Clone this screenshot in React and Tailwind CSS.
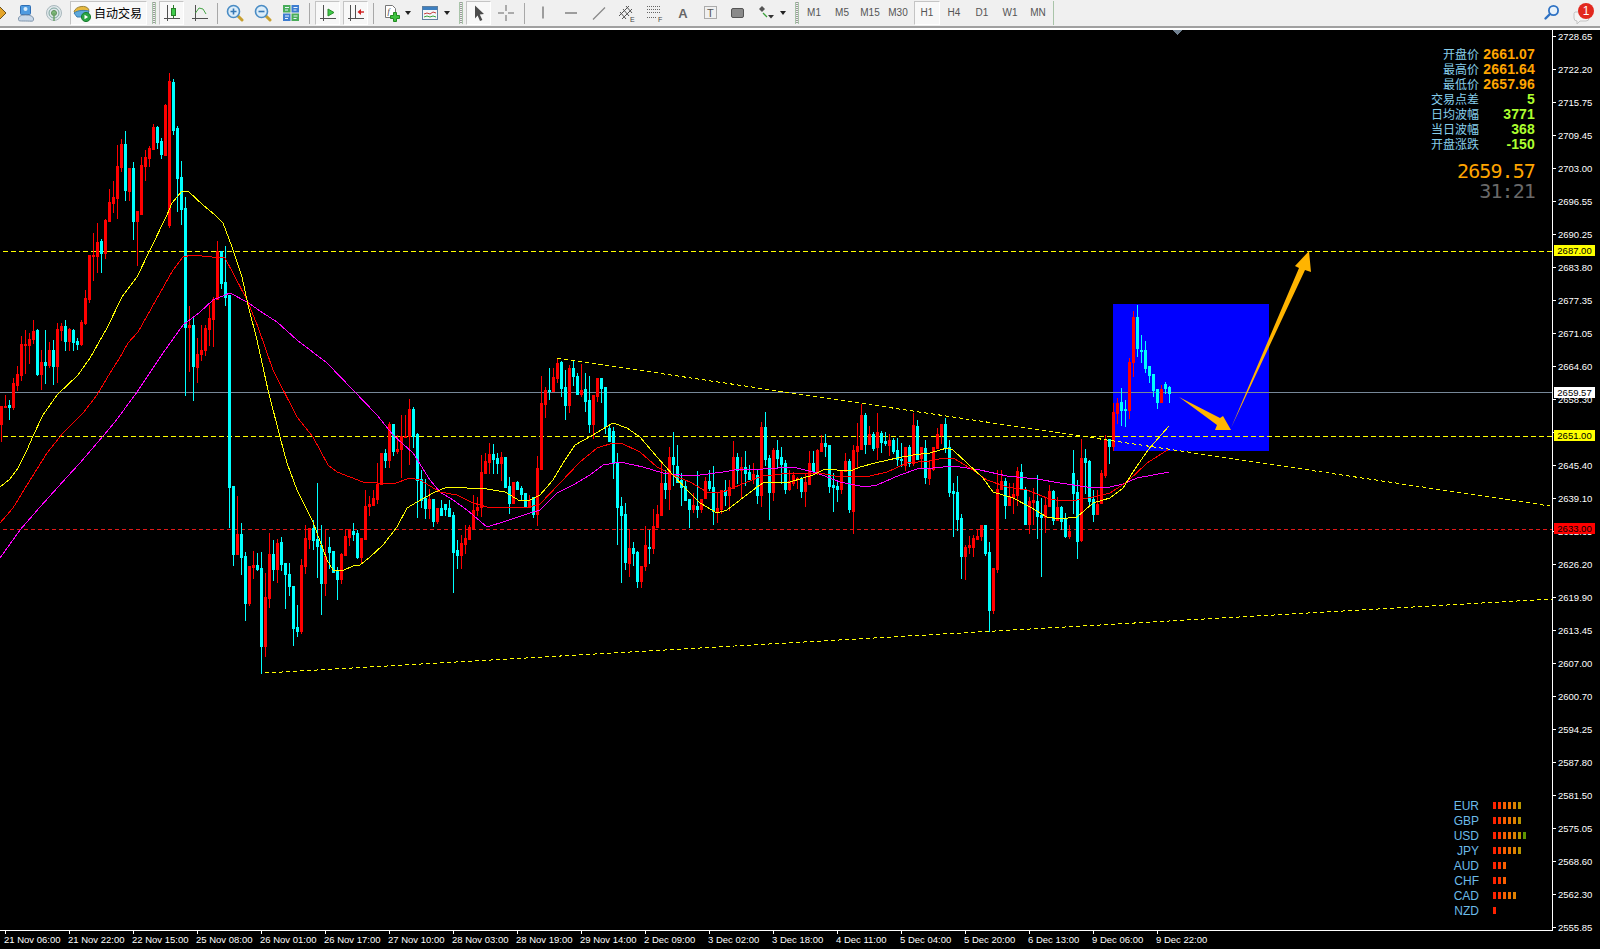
import React from "react";

const CANDLES = `r406,424,406,441 r406,407,395,407 c405,407,400,419 r383,407,378,409 r374,385,366,390 r344,375,336,380 r344,345,330,373 r339,345,333,363 r331,339,320,343 c330,374,329,375 r362,374,350,389 c362,365,330,383 r350,365,342,367 c350,366,340,384 r329,366,323,382 r326,330,323,340 c326,341,320,350 r329,341,328,350 c330,342,329,350 c341,344,338,349 r322,344,320,345
r298,323,290,324 r255,299,255,302 r255,256,233,280 r242,256,223,272 c241,253,239,272 r220,253,219,258 r202,221,189,221 r197,203,181,212 r166,198,145,218 r144,167,139,171 c144,190,131,200 r168,191,168,200 c168,221,162,239 r211,221,211,265 r165,214,157,214 r157,166,150,180 r148,158,146,166 r127,149,124,149 c127,142,126,148 c141,154,138,158 r105,155,104,155 r81,225,73,227 c82,130,79,134 c128,178,126,211 c177,209,161,224 c208,327,197,395 r325,327,306,371 c325,366,318,400 r354,367,338,382 r350,354,325,360 r328,350,325,355 r318,329,305,345 r299,319,297,346 r251,299,241,299 c251,283,251,288 c282,297,246,305
c295,487,295,527 c486,554,486,565 r534,554,496,554 c534,557,523,574 c556,603,552,620 r566,603,566,605 r565,567,551,578 c565,569,553,570 c568,646,552,673 r597,646,573,656 r554,598,533,607 c554,569,540,580 r543,569,539,582 c542,564,537,570 c563,574,563,608 c574,586,563,595 c586,628,586,645 c627,631,605,636 r565,631,559,633 r538,566,525,573 r528,539,528,548 c528,540,520,549 c539,546,483,577 c545,583,525,614 r556,583,530,595 c547,552,537,568 c551,572,551,572 c571,579,567,599 r554,579,553,583 r536,555,529,555 r529,537,529,545 c531,534,523,540 c533,557,530,558 r538,557,538,562 r506,539,490,539 r504,506,496,515 r498,505,490,505 r484,499,463,503 r453,484,453,484 c453,460,449,467 r424,460,422,467 c424,451,424,455 r449,451,435,453 r436,449,415,477 r436,437,415,437 r409,436,399,464 c409,436,407,447 c434,480,433,517 c479,500,470,507 c498,508,479,518 r499,508,489,518 c499,521,499,526 r508,521,508,523 c508,515,500,515 c504,509,504,515 c508,516,500,516 c515,552,512,592 c550,555,540,568 r543,555,535,568 r538,544,525,553 r527,539,525,539 r510,528,495,528 r507,510,497,515 r472,507,455,516 r461,473,453,473 r454,462,443,473 c454,459,444,473 c458,463,453,473 r457,463,452,480 c457,487,457,487 c486,503,477,513 r482,503,482,503 c482,489,481,489 c488,494,486,500 c493,506,493,506 r500,507,495,507 c497,514,497,517 r468,514,456,525 r403,469,376,469 r390,404,387,417
c390,391,368,399 r377,391,368,391 r363,378,358,382 c362,388,361,396 c387,405,370,419 r368,405,365,412 c368,376,360,385 c376,394,373,394 r390,394,364,396 c389,401,373,411 c400,424,376,432 r395,424,395,438 r378,396,378,401 c378,388,378,402 c387,426,387,433 c428,441,425,441 c431,463,427,478 c462,507,453,544 c506,515,497,582 c514,562,503,569 r548,563,530,576 c548,553,542,565 c552,581,551,587 r566,581,566,587 r545,566,526,570 c547,548,530,563 r526,548,509,553 r514,527,505,527 r483,515,461,515 c483,489,470,498 r457,489,447,509 c457,464,432,485 c466,482,445,482 c480,487,473,505 c486,500,480,500 c499,509,499,527 r505,509,493,512 c506,509,471,517 r499,509,499,512 r481,498,477,498 c481,488,470,490 c487,511,466,524 r508,512,492,522 r490,509,490,513 c490,495,480,505 r487,495,480,510 r457,488,441,488 c457,470,453,483 r467,470,457,498 c467,473,451,485 c472,479,465,479 r474,479,463,483 c475,495,470,503 r427,495,422,506 c427,459,412,465 c458,492,455,519 r450,492,448,500 c450,458,440,467 c457,464,447,483 c463,489,460,493 r481,489,470,490 r475,483,472,485 r478,479,477,488 c478,491,477,497 r482,491,473,506 r463,484,451,484 c463,471,451,474 r450,471,449,474 r443,451,435,451
c443,446,434,456 c445,486,445,492 c485,487,473,511 c486,489,482,501 r471,489,470,493 r461,471,453,471 c461,509,459,512 r450,511,445,533 r446,451,423,468 r415,449,404,449 c415,444,413,453 r434,444,426,444 c434,448,432,450 r432,447,413,459 c433,442,431,452 c441,443,432,445 r440,445,434,455 c440,451,438,453 c450,459,438,465 c459,460,443,466 r447,465,447,470 c447,463,445,466 r425,463,413,465 c426,459,420,459 r447,458,447,468 c448,477,440,483 r468,478,460,484 r447,469,447,470 r434,448,428,448 r424,435,424,443 c424,448,418,452 c447,492,440,496 c491,493,483,536 c492,519,476,530 c518,556,514,578 r547,556,545,579 r545,547,536,553 r538,547,535,556 r536,539,530,539 r525,536,525,540 c525,553,525,555 c552,610,542,631 r568,610,568,613 r489,569,470,572 r481,489,470,489 c481,505,478,518 r496,505,483,505 r494,497,483,513 r471,495,467,505 c472,489,464,489 c489,524,487,524 r501,524,497,533 r500,502,488,524 c501,516,475,538 c515,517,498,576 r505,517,497,532 r491,506,485,506 c491,520,490,524 r507,520,497,520 c507,521,506,529 c519,536,513,537 r531,536,525,538 c473,493,450,513 c492,541,480,558 r458,540,439,541 c458,462,449,493 c461,501,460,505 c499,514,490,521 r504,514,490,514 r473,503,470,503 r440,475,435,477
c439,446,439,463 r412,446,403,450 r403,413,398,423 c402,410,388,425 c409,410,400,426 r362,410,358,418 r317,362,311,376 c317,348,305,356 c350,351,335,362 c350,368,341,372 c366,375,366,382 c374,390,374,396 c389,402,389,408 r389,402,385,402 c384,388,382,393 c387,393,386,402`
  .trim().split(/\s+/).map((s) => {
    const [t, b, h, l] = s.slice(1).split(",").map(Number);
    return { red: s[0] === "r", t, b, h, l };
  });

const YELLOW = "0,487 10,479 18,468 27,450 33,436 43,415 57,395 78,375 90,358 107,328 122,297 137,277 150,250 167,215 172,203 182,191 188,191 203,205 215,215 223,223 232,247 242,277 248,305 257,340 268,390 280,437 287,463 297,490 313,522 327,560 333,570 342,571 353,566 360,565 370,557 383,545 397,527 407,508 417,502 433,493 447,487 467,488 487,489 505,492 520,501 530,500 540,495 553,480 563,463 575,445 593,435 613,423 627,428 640,437 657,457 673,475 687,490 700,503 717,513 727,510 740,500 757,487 763,483 790,482 813,475 825,469 837,470 853,470 860,467 875,463 897,458 913,455 930,453 947,448 953,450 967,463 983,478 993,492 1013,498 1030,507 1047,517 1060,519 1077,517 1093,503 1110,498 1123,488 1133,472 1148,450 1169,426";
const RED = "0,523 13,508 27,485 47,453 63,433 83,413 97,395 110,373 119,359 128,343 138,332 160,293 173,270 183,257 192,255 212,257 225,258 233,273 247,300 258,327 273,370 297,417 313,437 328,465 337,472 350,477 363,482 393,484 410,478 420,480 440,492 457,495 473,503 487,507 517,508 530,507 540,504 560,483 580,462 597,448 613,443 623,444 640,452 657,467 673,475 690,482 707,492 723,492 740,485 757,478 763,476 790,473 820,473 840,477 870,476 887,472 907,463 930,461 943,458 953,458 970,468 987,480 1007,487 1027,490 1047,498 1060,501 1077,500 1093,497 1110,493 1127,482 1147,463 1169,449";
const MAGENTA = "0,558 20,530 40,507 67,477 80,463 115,422 137,392 163,353 183,325 200,312 213,300 230,293 247,302 263,313 277,322 297,340 327,363 353,390 377,415 393,435 413,453 430,480 440,492 453,500 467,510 487,527 503,522 530,513 540,510 557,493 573,485 590,475 603,465 620,462 643,467 663,473 680,475 700,475 723,472 740,469 763,469 793,467 817,473 840,482 865,487 877,485 900,475 917,469 933,468 953,466 980,470 1007,476 1037,479 1060,483 1087,487 1110,487 1123,484 1137,478 1169,472";

const PRICES = ["2728.65","2722.20","2715.75","2709.45","2703.00","2696.55","2690.25","2683.80","2677.35","2671.05","2664.60","2658.30","2651.85","2645.40","2639.10","2632.65","2626.20","2619.90","2613.45","2607.00","2600.70","2594.25","2587.80","2581.50","2575.05","2568.60","2562.30","2555.85"];
const TIMES = ["21 Nov 06:00","21 Nov 22:00","22 Nov 15:00","25 Nov 08:00","26 Nov 01:00","26 Nov 17:00","27 Nov 10:00","28 Nov 03:00","28 Nov 19:00","29 Nov 14:00","2 Dec 09:00","3 Dec 02:00","3 Dec 18:00","4 Dec 11:00","5 Dec 04:00","5 Dec 20:00","6 Dec 13:00","9 Dec 06:00","9 Dec 22:00"];
const INFO = [
  ["开盘价","2661.07","text-[#ffa500]"],["最高价","2661.64","text-[#ffa500]"],["最低价","2657.96","text-[#ffa500]"],
  ["交易点差","5","text-[#adff2f]"],["日均波幅","3771","text-[#adff2f]"],["当日波幅","368","text-[#adff2f]"],["开盘涨跌","-150","text-[#adff2f]"],
];
const CURR = [["EUR",6],["GBP",6],["USD",7],["JPY",6],["AUD",3],["CHF",3],["CAD",5],["NZD",1]];
const BAR = ["#ff2200","#ff3300","#f95f00","#ee6f00","#e08000","#b89400","#5f9400"];

const A = "#505050";
const Svg = ({ children, w = 18, h = 18 }) => (
  <svg width={w} height={h} viewBox={`0 0 ${w} ${h}`} className="block shrink-0">{children}</svg>
);
const Axes = () => <path d="M4.5 1v16M1 14.5h16" stroke={A} fill="none" />;
const Slot = ({ w, active, children, className = "" }) => (
  <div
    className={`h-[24px] flex items-center justify-center shrink-0 ${active ? "border border-t-[#c4c4c4] border-l-[#c4c4c4] border-r-white border-b-white bg-[#f8f8f8]" : ""} ${className}`}
    style={{ width: w }}
  >
    {children}
  </div>
);
const Sep = () => <div className="w-px h-[21px] bg-[#a8a8a8] shrink-0" />;
const Grip = () => (
  <div className="w-[4px] h-[22px] shrink-0 border-x border-[#a9c4a9] bg-[repeating-linear-gradient(180deg,#9a9a9a_0px,#9a9a9a_1px,#f0f0f0_1px,#f0f0f0_2px)]" />
);
const Drop = () => (
  <svg width="6" height="4" viewBox="0 0 6 4" className="block shrink-0"><path d="M0 0h6L3 4z" fill="#222" /></svg>
);
const Gap = ({ w }) => <div className="shrink-0" style={{ width: w }} />;
const Mag = ({ minus }) => (
  <Svg>
    <path d="M11 11l5 5" stroke="#c8a030" strokeWidth="3" strokeLinecap="round" />
    <circle cx="7.5" cy="7.5" r="6" fill="#dcedf9" stroke="#4a8cc4" strokeWidth="1.6" />
    <path d={minus ? "M4.5 7.5h6" : "M4.5 7.5h6M7.5 4.5v6"} stroke="#3578b5" strokeWidth="1.6" />
  </Svg>
);
const Tf = ({ w, children, active }) => (
  <Slot w={w} active={active}>
    <span className="text-[10px] leading-none text-[#555]">{children}</span>
  </Slot>
);

function Toolbar() {
  return (
    <div className="h-[26px] bg-[#f0f0f0] flex items-center shrink-0 overflow-hidden">
      <Slot w={9} className="justify-start">
        <svg width="9" height="18" viewBox="0 0 9 18" className="block"><path d="M-6 9L0 3l6 6-6 6z" fill="#e5a52a" stroke="#6b5320" /></svg>
      </Slot>
      <Slot w={34}>
        <Svg>
          <rect x="3.5" y="1.5" width="10" height="9" rx="1" fill="#4f9be0" stroke="#2f6fb5" />
          <circle cx="8.5" cy="5" r="2" fill="#d8ecfa" />
          <path d="M1.5 15c0-3 3-4 7-4s8 1 8 4-1 2-8 2-7 0-7-2z" fill="#c9d8e8" stroke="#7d93aa" />
        </Svg>
      </Slot>
      <Slot w={22}>
        <Svg>
          <circle cx="9" cy="9" r="7.5" fill="#dfe7ea" stroke="#a9b8bd" />
          <circle cx="9" cy="9" r="5" fill="none" stroke="#7fa6a0" />
          <circle cx="9" cy="9" r="2.5" fill="#7dbb78" stroke="#5f8f5c" />
          <path d="M9 9v8" stroke="#6da36a" strokeWidth="1.5" />
        </Svg>
      </Slot>
      <Gap w={5} />
      <Slot w={77} active className="justify-start">
        <div className="pl-[2px] flex items-center gap-[3px]">
          <Svg>
            <path d="M1 8C2 2 14 0 16 6l-2 4H3z" fill="#e8b93e" stroke="#9a8236" />
            <path d="M1 9c4-3 10-3 15-2l-2 6H4z" fill="#5da9dd" stroke="#3a7cae" />
            <circle cx="13" cy="13" r="4.6" fill="#29a545" stroke="#1c7d32" />
            <path d="M11.5 10.8v4.4l3.6-2.2z" fill="#fff" />
          </Svg>
          <span className="text-[12px] leading-none text-black font-['Noto_Sans_CJK_SC',sans-serif]">自动交易</span>
        </div>
      </Slot>
      <Gap w={5} />
      <Grip />
      <Gap w={3} />
      <Slot w={25} active>
        <Svg><Axes /><path d="M10.5 1v13" stroke="#2b7d2b" /><rect x="8.5" y="4.5" width="4" height="7" fill="#3ecb4a" stroke="#2b7d2b" /></Svg>
      </Slot>
      <Slot w={32}>
        <Svg><Axes /><path d="M4.5 9L8 4l4 1 3 5" stroke="#46a546" fill="none" /></Svg>
      </Slot>
      <Gap w={1} />
      <Sep />
      <Gap w={3} />
      <Slot w={28}><Mag /></Slot>
      <Slot w={28}><Mag minus /></Slot>
      <Slot w={28}>
        <Svg>
          <rect x="1" y="1" width="7.5" height="7.5" fill="#49ad5a" /><rect x="9.5" y="1" width="7.5" height="7.5" fill="#3d7dd0" />
          <rect x="1" y="9.5" width="7.5" height="7.5" fill="#3d7dd0" /><rect x="9.5" y="9.5" width="7.5" height="7.5" fill="#49ad5a" />
          <path d="M3 3.5h4M11.5 3.5h4M3 12h4M11.5 12h4M3 6h3M11.5 6h3M3 14.5h3M11.5 14.5h3" stroke="#e8f3ff" />
        </Svg>
      </Slot>
      <Gap w={4} />
      <Sep />
      <Gap w={5} />
      <Slot w={25} active>
        <Svg><Axes /><path d="M9 5v7l6-3.5z" fill="#3ecb4a" stroke="#2b8d2b" /></Svg>
      </Slot>
      <Gap w={3} />
      <Slot w={25} active>
        <Svg><path d="M3.5 1v16M1 14.5h16M8.5 1v13" stroke={A} fill="none" /><path d="M17 8h-4" stroke="#d02020" strokeWidth="1.4" /><path d="M10.5 8l3.5-3v6z" fill="#d02020" /></Svg>
      </Slot>
      <Gap w={5} />
      <Sep />
      <Slot w={30} className="justify-end pr-[3px]">
        <Svg>
          <path d="M2.5 1.5h7l3 3v9h-10z" fill="#fff" stroke="#777" />
          <text x="4.5" y="10" fontSize="8" fontStyle="italic" fill="#333" fontFamily="Liberation Serif, serif">f</text>
          <path d="M10.5 8.5h3v3h3v3h-3v3h-3v-3h-3v-3h3z" fill="#3ec23e" stroke="#228b22" />
        </Svg>
      </Slot>
      <Slot w={8}><Drop /></Slot>
      <Slot w={32} className="justify-end pr-[5px]">
        <Svg>
          <rect x="1.5" y="2.5" width="15" height="13" fill="#f3f6f9" stroke="#5f7f9f" />
          <rect x="2" y="3" width="14" height="3" fill="#3d7fc0" />
          <path d="M3 10l3-1 3 1 3-2 3 1" stroke="#c83c3c" fill="none" />
          <path d="M3 13l3-1 3 1 3-1 3 1" stroke="#3aa03a" fill="none" />
        </Svg>
      </Slot>
      <Slot w={6}><Drop /></Slot>
      <Gap w={9} />
      <Grip />
      <Gap w={3} />
      <Slot w={25} active>
        <Svg><path d="M5 1.5l9 8.5-4.2.4 2.6 5.6-2.4 1-2.4-5.6L5 14.5z" fill="#4c4c4c" /></Svg>
      </Slot>
      <Slot w={30}>
        <Svg><path d="M9 1v6M9 11v6M1 9h6M11 9h6" stroke="#666" /></Svg>
      </Slot>
      <Gap w={3} />
      <Sep />
      <Gap w={4} />
      <Slot w={28}><Svg><path d="M9 2.5v12" stroke="#666" strokeWidth="1.2" /></Svg></Slot>
      <Slot w={28}><Svg><path d="M3 9h12" stroke="#666" strokeWidth="1.2" /></Svg></Slot>
      <Slot w={28}><Svg><path d="M3 15.5L15 3.5" stroke="#888" strokeWidth="1.3" /></Svg></Slot>
      <Slot w={27}>
        <Svg>
          <path d="M1 12L11 2M4 15L14 5M2 8l6 7M5 5l6 7M8 2l6 7" stroke="#555" />
          <text x="12" y="17.5" fontSize="7" fill="#444" fontFamily="Liberation Sans, sans-serif">E</text>
        </Svg>
      </Slot>
      <Slot w={29}>
        <Svg>
          <path d="M1 2.5h13M1 5.5h13M1 8.5h13M1 13.5h10" stroke="#666" strokeDasharray="1 1" />
          <text x="12" y="17.5" fontSize="7" fill="#444" fontFamily="Liberation Sans, sans-serif">F</text>
        </Svg>
      </Slot>
      <Slot w={28}><span className="text-[13px] leading-none font-bold text-[#666]">A</span></Slot>
      <Slot w={27}>
        <Svg>
          <rect x="2.5" y="2.5" width="12" height="12" fill="none" stroke="#666" strokeDasharray="1 1" />
          <text x="5" y="12.5" fontSize="11" fill="#555" fontFamily="Liberation Sans, sans-serif">T</text>
        </Svg>
      </Slot>
      <Slot w={28}><Svg><rect x="2.5" y="4.5" width="12" height="9" rx="1.5" fill="#8a8a8a" stroke="#555" /></Svg></Slot>
      <Slot w={28}>
        <Svg>
          <path d="M5 2l3 3-3 3-3-3z" fill="#555" /><path d="M6 9l4 4" stroke="#3aa03a" strokeWidth="1.2" />
          <path d="M11 11h6l-3 3.5z" fill="#333" />
        </Svg>
      </Slot>
      <Slot w={6}><Drop /></Slot>
      <Gap w={9} />
      <Grip />
      <Gap w={1} />
      <Tf w={28}>M1</Tf>
      <Tf w={28}>M5</Tf>
      <Tf w={28}>M15</Tf>
      <Tf w={28}>M30</Tf>
      <Gap w={2} />
      <Tf w={26} active>H1</Tf>
      <Tf w={28}>H4</Tf>
      <Tf w={28}>D1</Tf>
      <Tf w={28}>W1</Tf>
      <Tf w={28}>MN</Tf>
      <Gap w={1} />
      <div className="w-px h-[24px] bg-[#a9c4a9] shrink-0" />
      <div className="flex-1" />
      <Svg>
        <circle cx="10.5" cy="6.5" r="4.6" fill="#e8f2fb" stroke="#2f72c4" strokeWidth="1.8" />
        <path d="M7 10l-4.5 4.5" stroke="#2f72c4" strokeWidth="2.4" strokeLinecap="round" />
      </Svg>
      <Gap w={10} />
      <div className="w-[27px] h-[26px] shrink-0 flex items-center">
        <svg width="27" height="26" viewBox="0 0 27 26" className="block">
          <path d="M4 12h11a3 3 0 0 1 3 3v3a3 3 0 0 1-3 3H9l-3 3v-3a3 3 0 0 1-3-3v-3a3 3 0 0 1 1-3z" fill="#f4f4f4" stroke="#c4c4c4" />
          <circle cx="15" cy="11" r="8" fill="#e2281e" />
          <text x="15" y="15" textAnchor="middle" fontSize="12" fill="#fff" fontFamily="Liberation Sans, sans-serif">1</text>
        </svg>
      </div>
      <Gap w={2} />
    </div>
  );
}

function Plot() {
  return (
    <svg width="1552" height="900" viewBox="0 30 1552 900" className="block" shapeRendering="crispEdges">
      <rect x="1113" y="304" width="156" height="147" fill="#0000ff" />
      <path d="M3 251.5H1552M3 436.5H1552" stroke="#ffff00" strokeDasharray="5 3" />
      <path d="M3 529.5H1552" stroke="#e01818" strokeDasharray="4 3" />
      <path d="M0 392.5H1552" stroke="#778899" />
      <path d="M1173 30h9l-4.5 5z" fill="#708090" />
      {CANDLES.map((c, i) => {
        const x = 1 + 4 * i;
        const col = c.red ? "#ff0000" : "#00ffff";
        return (
          <g key={i} fill={col}>
            <rect x={x} y={c.h} width="1" height={c.l - c.h + 1} />
            <rect x={x - 1} y={c.t} width="3" height={c.b - c.t + 1} />
          </g>
        );
      })}
      <polyline points={MAGENTA} fill="none" stroke="#ff00ff" />
      <polyline points={RED} fill="none" stroke="#ff0000" />
      <polyline points={YELLOW} fill="none" stroke="#ffff00" />
      <path d="M557 358L1550 506" stroke="#ffff00" strokeDasharray="4 3" fill="none" />
      <path d="M265 673L1552 599" stroke="#ffff00" strokeDasharray="4 3" fill="none" />
      <g fill="#ffb400" shapeRendering="geometricPrecision">
        <polygon points="1179,397 1220,418 1223,416 1231,430 1215,430 1217,425" />
        <polygon points="1231,428 1299,268 1295,266 1309,251 1311,272 1305,270" />
      </g>
    </svg>
  );
}

export default function App() {
  return (
    <div className="w-[1600px] h-[949px] bg-black flex flex-col overflow-hidden font-['Liberation_Sans',sans-serif]">
      <Toolbar />
      <div className="h-[2px] bg-[#a0a0a0] shrink-0" />
      <div className="h-[2px] bg-white shrink-0" />
      <div className="flex shrink-0 h-[901px] relative">
        <div className="w-[1553px] h-[901px] border-r border-b border-white relative shrink-0">
          <Plot />
          <div className="absolute top-[16px] right-[17px] flex flex-col items-end">
            {INFO.map(([l, v, c]) => (
              <div key={l} className="flex h-[15px] items-center justify-end">
                <span className="text-[12px] leading-none text-[#87ceeb] font-['Noto_Sans_CJK_SC',sans-serif]">{l}</span>
                <span className={`w-[56px] text-right text-[14px] leading-none font-bold tracking-[0.15px] ${c}`}>{v}</span>
              </div>
            ))}
            <div className="mt-[10px] text-[20px] leading-[20px] tracking-[-0.9px] text-[#ffa500] font-['DejaVu_Sans_Mono',monospace]">2659.57</div>
            <div className="text-[20px] leading-[20px] tracking-[-0.9px] text-[#696969] font-['DejaVu_Sans_Mono',monospace]">31:21</div>
          </div>
          <div className="absolute bottom-[12px] right-0 w-[120px] flex flex-col">
            {CURR.map(([n, k]) => (
              <div key={n} className="flex h-[15px] items-center">
                <span className="flex-1 text-right text-[12px] leading-none text-[#6cbbe8]">{n}</span>
                <div className="w-[59px] ml-[14px] flex gap-[2px]">
                  {BAR.slice(0, k).map((b, i) => (
                    <div key={i} className="w-[3px] h-[7px]" style={{ background: b }} />
                  ))}
                </div>
              </div>
            ))}
          </div>
        </div>
        <div className="w-[47px] shrink-0 relative">
          <div className="-mt-[10px] flex flex-col">
            {PRICES.map((p) => (
              <div key={p} className="h-[33px] flex items-center">
                <div className="w-[3px] h-px bg-white" />
                <span className="ml-[2px] text-[9.5px] leading-none text-white">{p}</span>
              </div>
            ))}
          </div>
          <div className="absolute left-[1px] top-[215px] w-[41px] h-[11px] bg-[#ffff00] text-black text-[9.5px] leading-[11px] text-center">2687.00</div>
          <div className="absolute left-[1px] top-[357px] w-[41px] h-[11px] bg-white text-black text-[9.5px] leading-[11px] text-center">2659.57</div>
          <div className="absolute left-[1px] top-[400px] w-[41px] h-[11px] bg-[#ffff00] text-black text-[9.5px] leading-[11px] text-center">2651.00</div>
          <div className="absolute left-[1px] top-[493px] w-[41px] h-[11px] bg-[#ff0000] text-black text-[9.5px] leading-[11px] text-center">2633.00</div>
        </div>
      </div>
      <div className="flex-1 pl-[4px] flex overflow-hidden">
        {TIMES.map((t) => (
          <div key={t} className="w-[64px] shrink-0 flex flex-col">
            <div className="w-px h-[3px] bg-white ml-px" />
            <span className="mt-[1px] text-[9.5px] leading-none text-white whitespace-nowrap">{t}</span>
          </div>
        ))}
      </div>
    </div>
  );
}
